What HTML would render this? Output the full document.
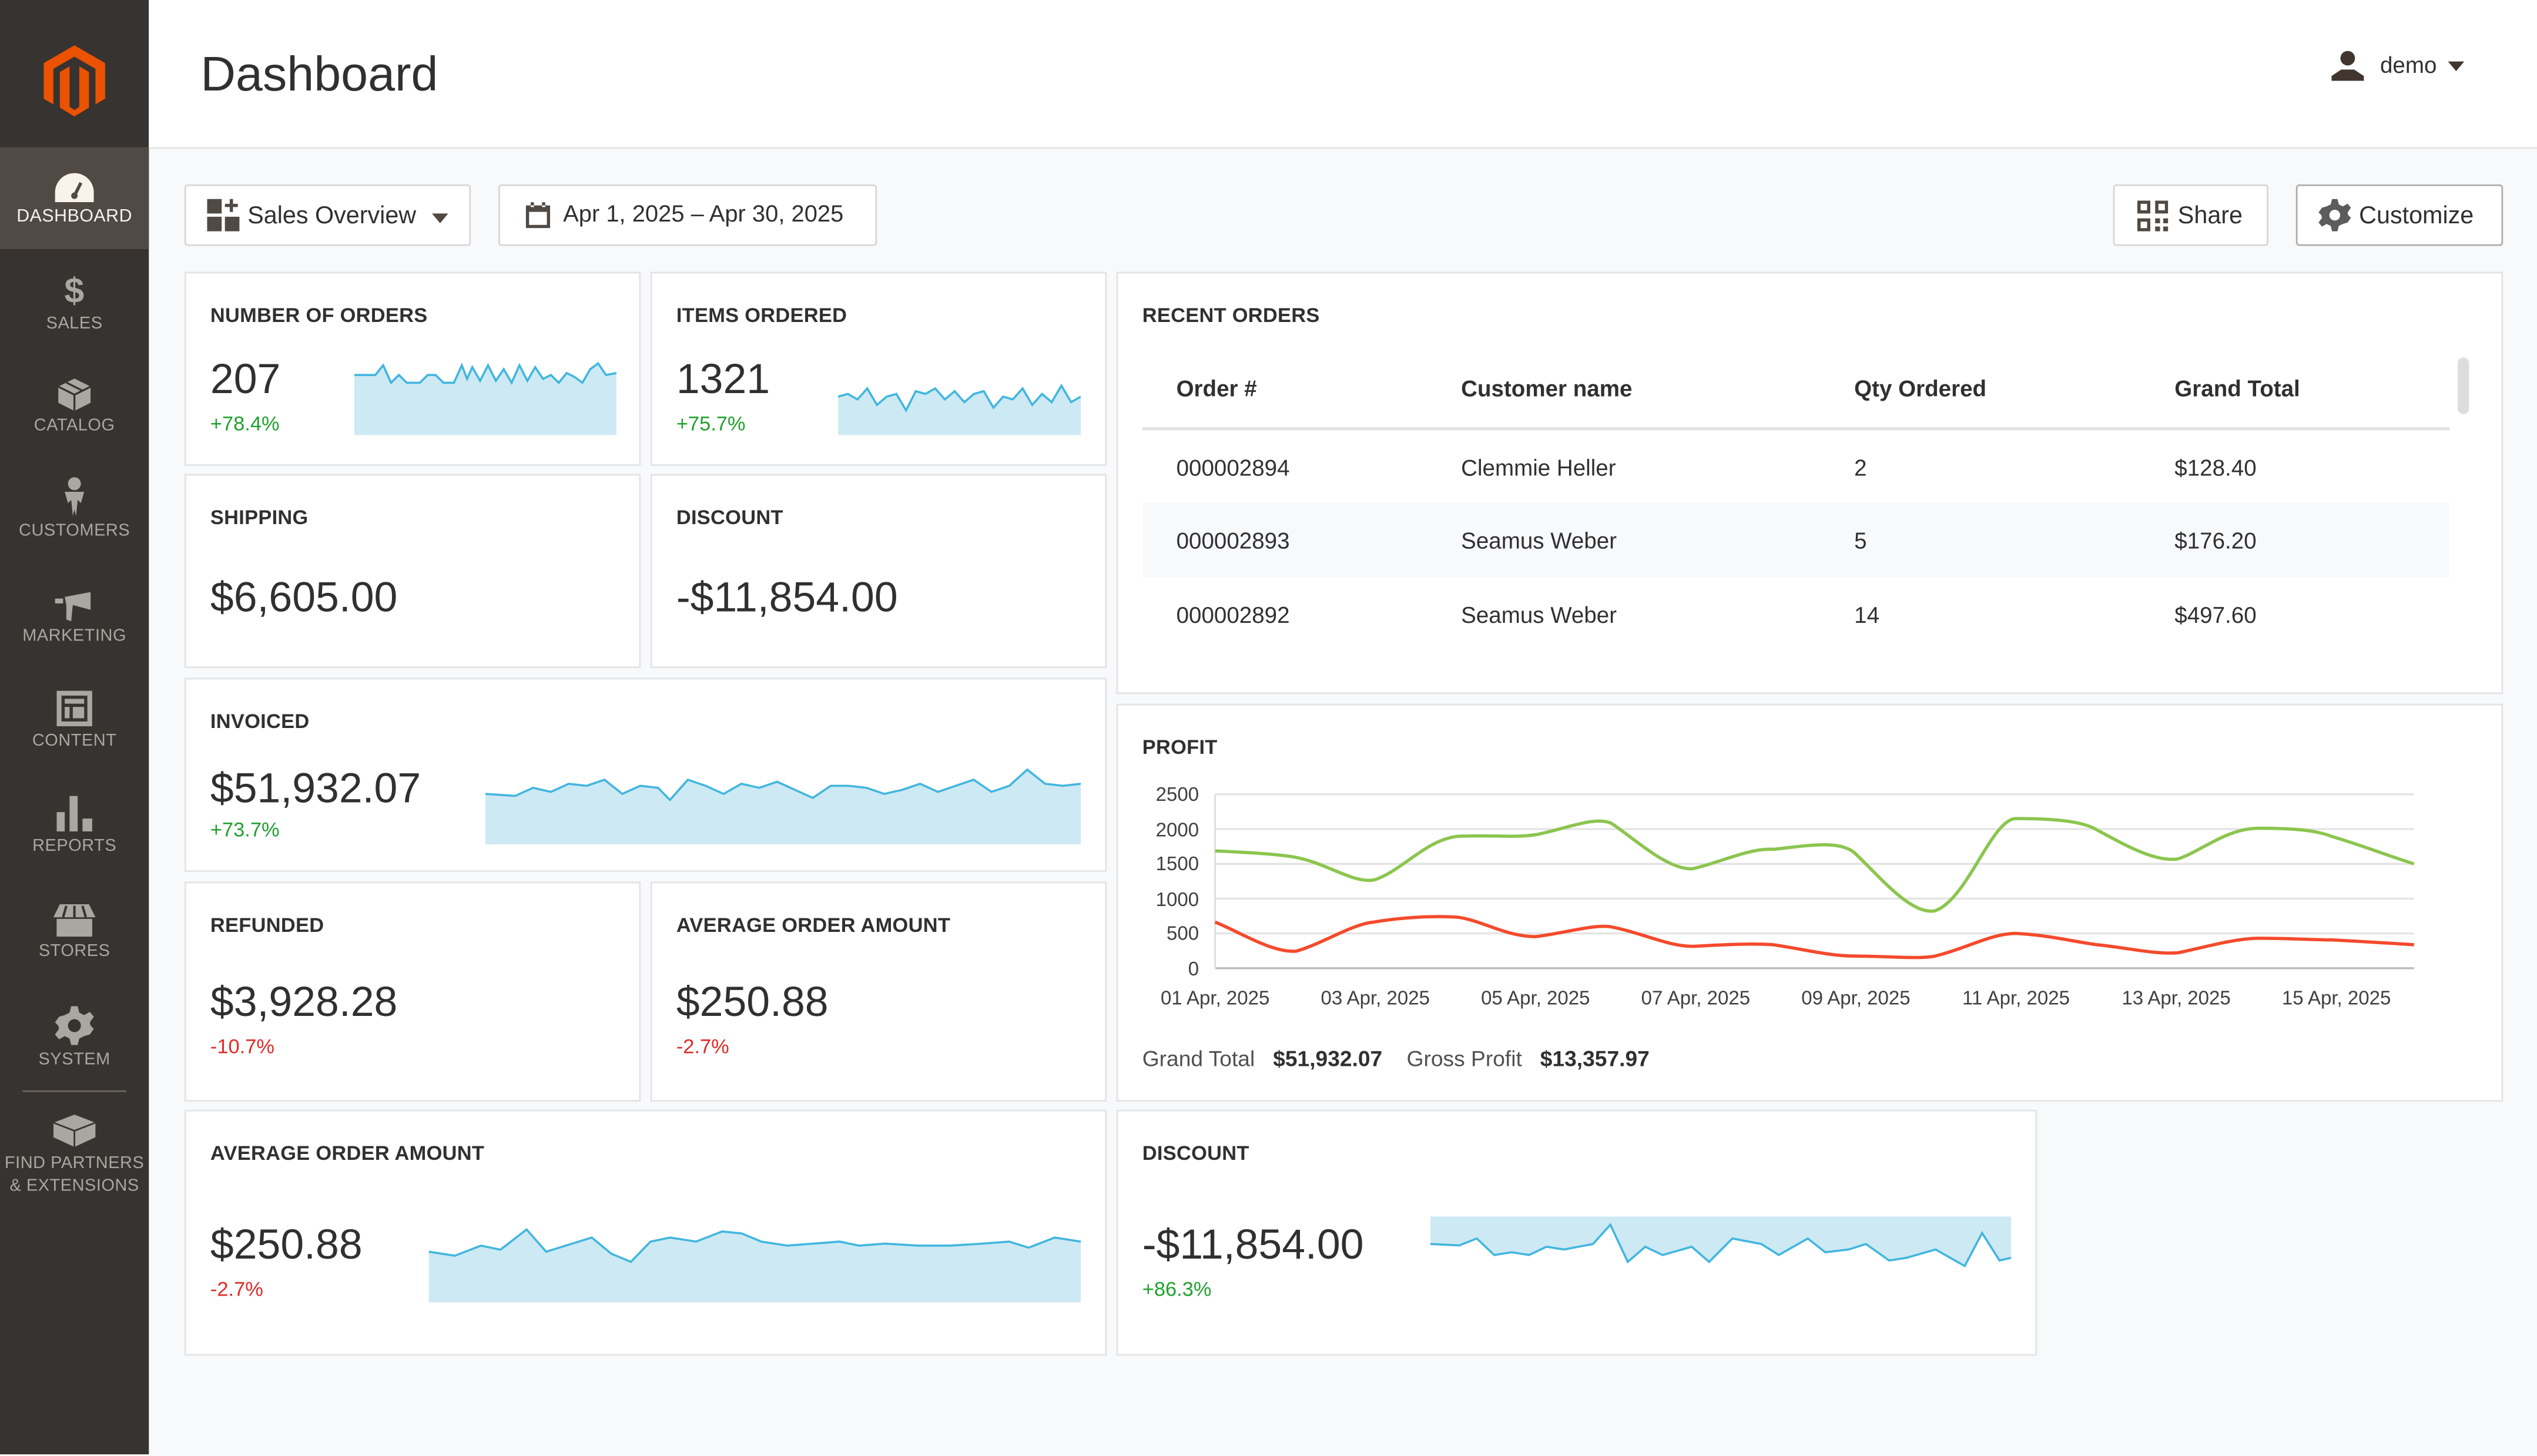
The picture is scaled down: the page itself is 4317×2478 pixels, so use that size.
<!DOCTYPE html>
<html><head><meta charset="utf-8">
<style>
*{box-sizing:border-box;margin:0;padding:0}
html,body{width:4317px;height:2474px;overflow:hidden;background:#f8f9fa}
body{font-family:"Liberation Sans",sans-serif;color:#303030}
#w{position:absolute;left:0;top:0;width:1568px;height:899px;transform:scale(2.7532);transform-origin:0 0;background:#f8f9fa}
.a{position:absolute}
.side{left:0;top:0;width:92px;height:899px;background:#373330}
.nav{position:absolute;left:0;width:92px;text-align:center;color:#aaa6a0;font-size:10.5px;letter-spacing:.2px}
.nav svg{display:block;margin:0 auto 3px}
.hdr{left:92px;top:0;width:1476px;height:92px;background:#fff;border-bottom:1px solid #e3e3e3}
.card{position:absolute;background:#fff;border:1px solid #e3e3e3}
.t{position:absolute;left:15px;top:19px;font-size:12.5px;font-weight:bold;color:#303030;letter-spacing:.1px}
.v{position:absolute;left:15px;font-size:26px;color:#303030}
.p{position:absolute;left:15px;font-size:12.5px}
.g{color:#22a030}.r{color:#e02b27}
.btn{position:absolute;background:#fff;border:1px solid #d6d6d6;border-radius:2px;font-size:15px;color:#303030;display:flex;align-items:center}
.sp{position:absolute}
.sp path.f{fill:#cde9f4}
.sp path.l{fill:none;stroke:#41b6de;stroke-width:1.3;vector-effect:non-scaling-stroke}
table{border-collapse:collapse}
</style></head><body><div id="w">
<div class="a side">
 <svg class="a" style="left:27px;top:28px" width="38" height="44" viewBox="0 0 38 44"><path d="M19 0L38 11V33L32 36.5V14.5L19 7L6 14.5V36.5L0 33V11Z M10 16.5L16 13V38L19 40L22 38V13L28 16.5V38.5L19 44L10 38.5Z" fill="#eb5202"/></svg>
 <div class="a" style="left:0;top:91px;width:92px;height:63px;background:#514943"></div>
 <div class="nav" style="top:107px;color:#f7f3eb;font-size:11px"><svg width="24" height="18" viewBox="0 0 24 18"><path d="M0 18V12A12 12 0 0 1 24 12V18Z" fill="#f7f3eb"/><path d="M12 14L16 6" stroke="#514943" stroke-width="2"/><circle cx="12" cy="14" r="2" fill="#514943"/></svg>DASHBOARD</div>
 <div class="nav" style="top:168px"><div style="font-size:22px;font-weight:bold;line-height:24px;margin-bottom:2px">$</div>SALES</div>
 <div class="nav" style="top:234px"><svg width="20" height="20" viewBox="0 0 20 20"><path d="M10 0L20 5V15L10 20L0 15V5Z" fill="#aaa6a0"/><path d="M0 5L10 10L20 5M10 10V20M5 2.5L15 7.5" stroke="#373330" stroke-width="1.2" fill="none"/></svg>CATALOG</div>
 <div class="nav" style="top:295px"><svg width="14" height="24" viewBox="0 0 14 24"><circle cx="7" cy="4" r="4" fill="#aaa6a0"/><path d="M1 9H13L11 16L9 14L8 24L7 20L6 24L5 14L3 16Z" fill="#aaa6a0"/></svg>CUSTOMERS</div>
 <div class="nav" style="top:364px"><svg width="24" height="20" viewBox="0 0 24 20"><path d="M0 6H5V9H0Z M6 5L22 2V13L11 10L10 20L7 19L7 10Z" fill="#aaa6a0"/></svg>MARKETING</div>
 <div class="nav" style="top:427px"><svg width="22" height="22" viewBox="0 0 22 22"><path d="M0 0H22V22H0Z M3 3V19H19V3Z M5 5H17V8H5Z M5 10H8V17H5Z M10 10H17V17H10Z" fill="#aaa6a0" fill-rule="evenodd"/></svg>CONTENT</div>
 <div class="nav" style="top:492px"><svg width="22" height="22" viewBox="0 0 22 22"><path d="M0 10H5V22H0Z M8 0H13V22H8Z M16 14H22V22H16Z" fill="#aaa6a0"/></svg>REPORTS</div>
 <div class="nav" style="top:559px"><svg width="26" height="20" viewBox="0 0 26 20"><path d="M4 0H22L26 8H0Z M2 9H24V20H2Z" fill="#aaa6a0"/><path d="M8 1L6 8M13 1V8M18 1L20 8" stroke="#373330" stroke-width="1.5"/></svg>STORES</div>
 <div class="nav" style="top:622px"><svg width="24" height="24" viewBox="0 0 24 24"><path d="M10 0H14L15 4L18 5.5L21.5 3.5L24 6.5L21.5 10L22 12L24 14V14L21.5 17.5L18 18.5L15 20L14 24H10L9 20L6 18.5L2.5 20.5L0 17.5L2.5 14L2 12L0 10L2.5 6.5L6 5.5L9 4Z" fill="#aaa6a0"/><circle cx="12" cy="12" r="4" fill="#373330"/></svg>SYSTEM</div>
 <div class="a" style="left:14px;top:674px;width:64px;height:1px;background:#6e6862"></div>
 <div class="nav" style="top:687px;line-height:14px"><svg width="26" height="22" viewBox="0 0 26 22"><path d="M0 7L13 2L26 7V16L13 22L0 16Z" fill="#aaa6a0"/><path d="M0 7L13 12L26 7M13 12V22" stroke="#373330" stroke-width="1" fill="none"/></svg>FIND PARTNERS<br>&amp; EXTENSIONS</div>
</div>
<div class="a hdr"></div>
<div class="a" style="left:124px;top:30px;font-size:30px;color:#303030">Dashboard</div>
<svg class="a" style="left:1441px;top:31px" width="20" height="19" viewBox="0 0 20 19"><circle cx="10" cy="5" r="4.5" fill="#41362f"/><path d="M0 19V16L6 12H14L20 16V19Z" fill="#41362f"/></svg>
<div class="a" style="left:1471px;top:32px;font-size:14px;color:#303030">demo</div>
<div class="a" style="left:1513px;top:38px;border:5px solid transparent;border-top:6px solid #41362f;border-bottom:0"></div>

<div class="btn" style="left:114px;top:114px;width:177px;height:38px"><svg style="margin:0 5px 0 13px" width="20" height="20" viewBox="0 0 20 20"><path d="M0 0H9V9H0Z M0 11H9V20H0Z M11 11H20V20H11Z M14 0H16V3H19V5H16V8H14V5H11V3H14Z" fill="#514943"/></svg>Sales Overview<span style="margin-left:10px;border:5px solid transparent;border-top:6px solid #514943;border-bottom:0;margin-top:3px"></span></div>
<div class="btn" style="left:308px;top:114px;width:234px;height:38px;font-size:14.5px"><svg style="margin:0 8px 0 16px" width="15" height="16" viewBox="0 0 15 16"><path d="M0 2H15V16H0Z M2 6V14H13V6Z M3 0H5V3H3Z M10 0H12V3H10Z" fill="#514943" fill-rule="evenodd"/></svg>Apr 1, 2025 – Apr 30, 2025</div>
<div class="btn" style="left:1306px;top:114px;width:96px;height:38px"><svg style="margin:0 6px 0 14px" width="19" height="19" viewBox="0 0 19 19"><path d="M0 0H8V8H0Z M11 0H19V8H11Z M0 11H8V19H0Z M11 11H14V14H11Z M16 16H19V19H16Z M16 11H19V14H16Z M11 16H14V19H11Z" fill="#514943"/><path d="M2 2H6V6H2Z M13 2H17V6H13Z M2 13H6V17H2Z" fill="#fff"/></svg>Share</div>
<div class="btn" style="left:1419px;top:114px;width:128px;height:38px;border-color:#adadad"><svg style="margin:0 5px 0 13px" width="20" height="20" viewBox="0 0 24 24"><path d="M10 0H14L15 4L18 5.5L21.5 3.5L24 6.5L21.5 10L22 12L24 14L21.5 17.5L18 18.5L15 20L14 24H10L9 20L6 18.5L2.5 20.5L0 17.5L2.5 14L2 12L0 10L2.5 6.5L6 5.5L9 4Z" fill="#5c5c5c"/><circle cx="12" cy="12" r="4" fill="#fff"/></svg>Customize</div>

<div class="card" style="left:114px;top:168px;width:282px;height:120px"><div class="t">NUMBER OF ORDERS</div><div class="v" style="top:50px">207</div><div class="p g" style="top:86px">+78.4%</div>
<svg class="sp" style="left:104px;top:52px" width="162" height="48" viewBox="0 0 100 40" preserveAspectRatio="none"><path class="f" d="M0 9L8 9L11 4L14 13L17 9L20 13L25 13L28 9L31 9L34 13L38 13L41 4L43 11L45 5L48 12L51 4L54 12L57 6L60 13L63 4L66 12L69 5L72 11L75 9L78 13L81 8L84 10L87 13L90 6L93 3L96 9L100 8V40H0Z"/><path class="l" d="M0 9L8 9L11 4L14 13L17 9L20 13L25 13L28 9L31 9L34 13L38 13L41 4L43 11L45 5L48 12L51 4L54 12L57 6L60 13L63 4L66 12L69 5L72 11L75 9L78 13L81 8L84 10L87 13L90 6L93 3L96 9L100 8"/></svg></div>
<div class="card" style="left:402px;top:168px;width:282px;height:120px"><div class="t">ITEMS ORDERED</div><div class="v" style="top:50px">1321</div><div class="p g" style="top:86px">+75.7%</div>
<svg class="sp" style="left:115px;top:66px" width="150" height="34" viewBox="0 0 100 40" preserveAspectRatio="none"><path class="f" d="M0 12L4 10L8 14L12 6L16 18L20 12L24 10L28 22L32 8L36 10L40 6L44 14L48 8L52 16L56 10L60 8L64 20L68 12L72 14L76 6L80 18L84 10L88 16L92 4L96 16L100 12V40H0Z"/><path class="l" d="M0 12L4 10L8 14L12 6L16 18L20 12L24 10L28 22L32 8L36 10L40 6L44 14L48 8L52 16L56 10L60 8L64 20L68 12L72 14L76 6L80 18L84 10L88 16L92 4L96 16L100 12"/></svg></div>
<div class="card" style="left:114px;top:293px;width:282px;height:120px"><div class="t">SHIPPING</div><div class="v" style="top:60px">$6,605.00</div></div>
<div class="card" style="left:402px;top:293px;width:282px;height:120px"><div class="t">DISCOUNT</div><div class="v" style="top:60px">-$11,854.00</div></div>
<div class="card" style="left:114px;top:419px;width:570px;height:120px"><div class="t">INVOICED</div><div class="v" style="top:52px">$51,932.07</div><div class="p g" style="top:86px">+73.7%</div>
<svg class="sp" style="left:185px;top:52px" width="368" height="50" viewBox="0 0 100 40" preserveAspectRatio="none"><path class="f" d="M0 15L5 16L8 12L11 14L14 10L17 11L20 8L23 15L26 11L29 12L31 18L34 8L37 11L40 15L43 10L46 12L49 9L52 13L55 17L58 11L61 11L64 12L67 15L70 13L73 10L76 14L79 11L82 8L85 14L88 11L91 3L94 10L97 11L100 10V40H0Z"/><path class="l" d="M0 15L5 16L8 12L11 14L14 10L17 11L20 8L23 15L26 11L29 12L31 18L34 8L37 11L40 15L43 10L46 12L49 9L52 13L55 17L58 11L61 11L64 12L67 15L70 13L73 10L76 14L79 11L82 8L85 14L88 11L91 3L94 10L97 11L100 10"/></svg></div>
<div class="card" style="left:114px;top:545px;width:282px;height:136px"><div class="t">REFUNDED</div><div class="v" style="top:58px">$3,928.28</div><div class="p r" style="top:94px">-10.7%</div></div>
<div class="card" style="left:402px;top:545px;width:282px;height:136px"><div class="t">AVERAGE ORDER AMOUNT</div><div class="v" style="top:58px">$250.88</div><div class="p r" style="top:94px">-2.7%</div></div>
<div class="card" style="left:114px;top:686px;width:570px;height:152px"><div class="t">AVERAGE ORDER AMOUNT</div><div class="v" style="top:67px">$250.88</div><div class="p r" style="top:103px">-2.7%</div>
<svg class="sp" style="left:150px;top:68px" width="403" height="50" viewBox="0 0 100 40" preserveAspectRatio="none"><path class="f" d="M0 15L4 17L8 12L11 14L15 4L18 15L21 12L25 8L28 16L31 20L34 10L37 8L41 10L45 5L48 6L51 10L55 12L59 11L63 10L66 12L70 11L75 12L80 12L85 11L89 10L92 13L96 8L100 10V40H0Z"/><path class="l" d="M0 15L4 17L8 12L11 14L15 4L18 15L21 12L25 8L28 16L31 20L34 10L37 8L41 10L45 5L48 6L51 10L55 12L59 11L63 10L66 12L70 11L75 12L80 12L85 11L89 10L92 13L96 8L100 10"/></svg></div>
<div class="card" style="left:690px;top:686px;width:569px;height:152px"><div class="t">DISCOUNT</div><div class="v" style="top:67px">-$11,854.00</div><div class="p g" style="top:103px">+86.3%</div>
<svg class="sp" style="left:193px;top:65px" width="359" height="34" viewBox="0 0 100 40" preserveAspectRatio="none"><path class="f" d="M0 20L5 21L8 16L11 28L14 26L17 28L20 22L23 24L28 20L31 6L34 33L37 22L40 28L45 22L48 33L52 16L57 20L60 28L65 16L68 26L72 24L75 20L79 32L82 30L87 24L92 36L95 12L98 32L100 30V0H0Z"/><path class="l" d="M0 20L5 21L8 16L11 28L14 26L17 28L20 22L23 24L28 20L31 6L34 33L37 22L40 28L45 22L48 33L52 16L57 20L60 28L65 16L68 26L72 24L75 20L79 32L82 30L87 24L92 36L95 12L98 32L100 30"/></svg></div>

<div class="card" style="left:690px;top:168px;width:857px;height:261px"><div class="t">RECENT ORDERS</div>
 <div class="a" style="left:828px;top:52px;width:7px;height:35px;border-radius:4px;background:#ddd"></div>
 <table class="a" style="left:15px;top:52px;width:808px;font-size:14px">
  <tr style="height:44px;border-bottom:2px solid #e3e3e3;font-weight:bold"><td style="padding-left:21px;width:197px;padding-bottom:6px">Order #</td><td style="width:243px;padding-bottom:6px">Customer name</td><td style="width:198px;padding-bottom:6px">Qty Ordered</td><td style="padding-bottom:6px">Grand Total</td></tr>
  <tr style="height:46px"><td style="padding-left:21px">000002894</td><td>Clemmie Heller</td><td>2</td><td>$128.40</td></tr>
  <tr style="height:46px;background:#f8f9fa"><td style="padding-left:21px">000002893</td><td>Seamus Weber</td><td>5</td><td>$176.20</td></tr>
  <tr style="height:46px"><td style="padding-left:21px">000002892</td><td>Seamus Weber</td><td>14</td><td>$497.60</td></tr>
 </table>
</div>

<div class="card" style="left:690px;top:435px;width:857px;height:246px"><div class="t">PROFIT</div>
<svg class="a" style="left:-690px;top:-435px" width="1568" height="899">
 <g stroke="#e3e3e3" stroke-width="1.2"><line x1="750" y1="490" x2="1491" y2="490"/><line x1="750" y1="511.5" x2="1491" y2="511.5"/><line x1="750" y1="533" x2="1491" y2="533"/><line x1="750" y1="554.5" x2="1491" y2="554.5"/><line x1="750" y1="576" x2="1491" y2="576"/></g>
 <line x1="750" y1="597.5" x2="1491" y2="597.5" stroke="#bbb" stroke-width="1.2"/>
 <line x1="750" y1="490" x2="750" y2="598" stroke="#ddd"/>
 <g font-size="12" fill="#404040" text-anchor="end" font-family="Liberation Sans"><text x="740" y="494">2500</text><text x="740" y="516">2000</text><text x="740" y="537">1500</text><text x="740" y="559">1000</text><text x="740" y="580">500</text><text x="740" y="602">0</text></g>
 <g font-size="12" fill="#404040" text-anchor="middle" font-family="Liberation Sans"><text x="750" y="620">01 Apr, 2025</text><text x="849" y="620">03 Apr, 2025</text><text x="948" y="620">05 Apr, 2025</text><text x="1047" y="620">07 Apr, 2025</text><text x="1146" y="620">09 Apr, 2025</text><text x="1245" y="620">11 Apr, 2025</text><text x="1344" y="620">13 Apr, 2025</text><text x="1443" y="620">15 Apr, 2025</text></g>
 <path d="M750 525C770 526 790 527 800 529C820 533 835 545 848 543C865 538 880 518 900 516C920 515 935 517 948 515C965 512 985 503 995 508C1010 518 1030 537 1045 536C1060 533 1080 523 1095 524C1115 522 1135 518 1145 526C1160 540 1180 565 1195 562C1215 555 1230 505 1245 505C1265 505 1285 506 1295 512C1310 520 1330 532 1345 530C1360 525 1375 511 1395 511C1415 511 1430 512 1440 516C1460 522 1475 528 1491 533" fill="none" stroke="#8cc54f" stroke-width="2"/>
 <path d="M750 569C765 575 785 588 800 587C815 583 835 570 848 569C865 566 885 565 900 566C915 568 930 578 948 578C965 576 985 570 995 572C1015 576 1030 584 1045 584C1065 583 1080 582 1095 583C1115 586 1130 590 1145 590C1165 590 1185 592 1195 590C1215 585 1230 576 1245 576C1265 577 1280 581 1295 583C1315 585 1330 589 1345 588C1360 585 1380 579 1395 579C1415 579 1430 580 1440 580C1460 581 1475 582 1491 583" fill="none" stroke="#f44a2c" stroke-width="2"/>
</svg>
 <div class="a" style="left:15px;top:211px;font-size:13.5px;color:#505050;white-space:nowrap">Grand Total &nbsp; <b style="color:#303030">$51,932.07</b> &nbsp; &nbsp;Gross Profit &nbsp; <b style="color:#303030">$13,357.97</b></div>
</div>
</div></body></html>
